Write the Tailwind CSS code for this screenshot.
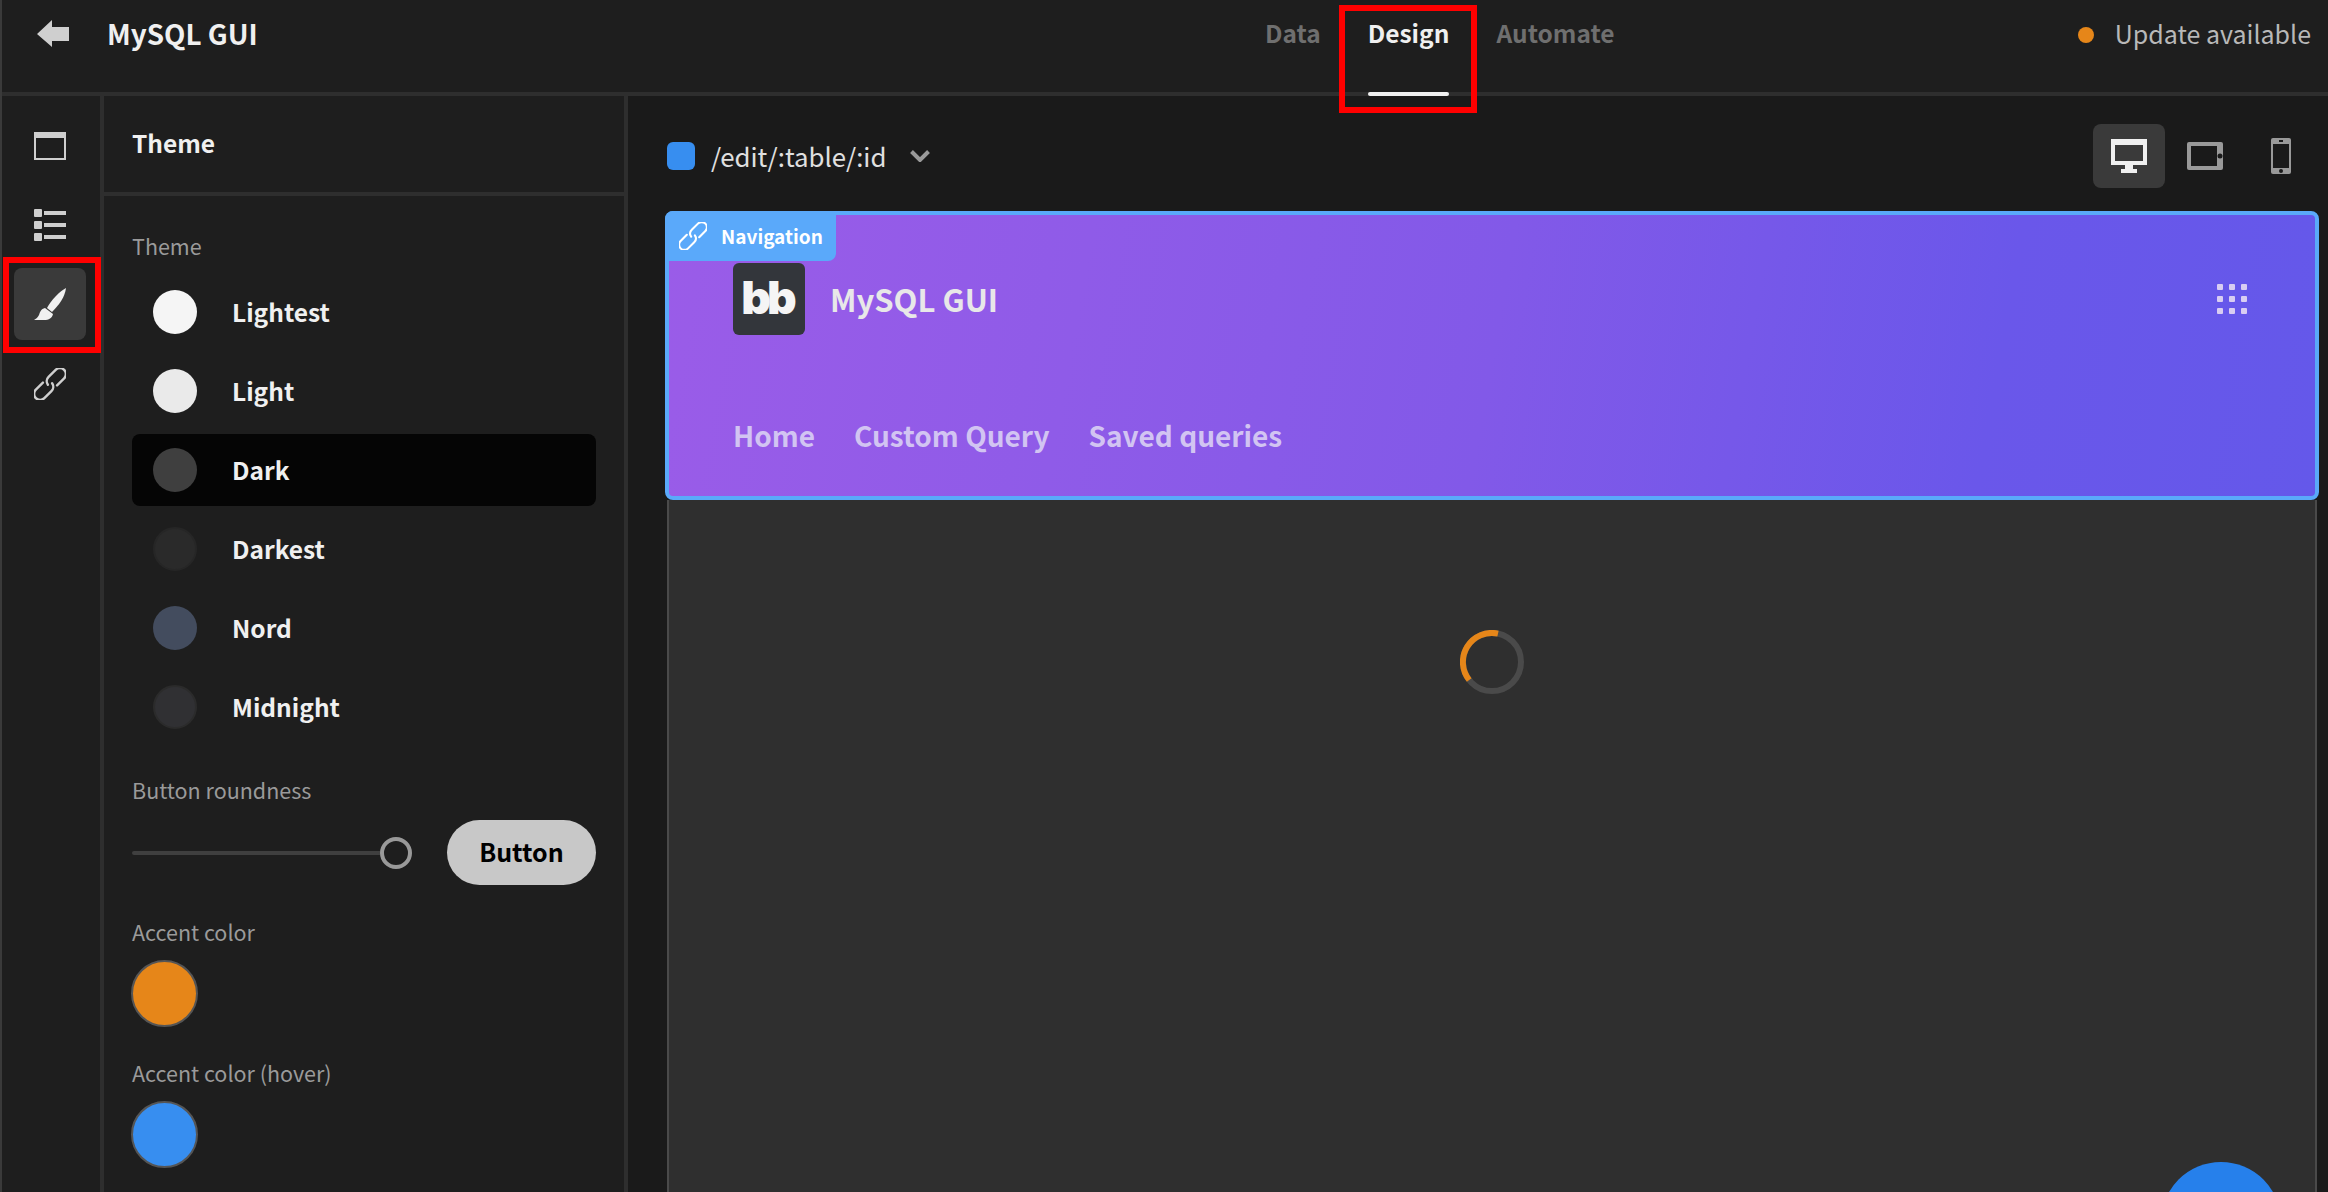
<!DOCTYPE html>
<html lang="en">
<head>
    <meta charset="UTF-8">
    <meta name="viewport" content="width=device-width, initial-scale=1.0">
    <title>MySQL GUI - Design</title>
    <script src="https://cdn.jsdelivr.net/npm/@tailwindcss/browser@4"></script>
</head>
<body class="bg-[#1a1a1a]">
<div class="relative w-[2328px] h-[1192px] overflow-hidden flex flex-col border-l-2 border-[#3a3a3a] font-['Noto_Sans_CJK_SC','Noto_Sans',sans-serif] text-[#f0f0f0]">

    <!-- top bar -->
    <header class="relative h-[96px] shrink-0 flex bg-[#1e1e1e] border-b-4 border-[#2e2e2e]">
        <svg class="absolute left-[35px] top-[20px] w-[32px] h-[27px]" viewBox="0 0 32 27" fill="#cfcfcf"><path d="M0 14 15 0v7h17v14H15v6z"/></svg>
        <div class="ml-[105px] mt-[12px] h-[42px] leading-[42px] text-[27.800px] font-semibold w-[1158px]">MySQL GUI</div>
        <nav class="flex gap-[47px] mt-[12px] h-[42px] leading-[42px] text-[24.500px] font-semibold text-[#6f6f6f]">
            <span>Data</span>
            <span class="relative text-[#f0f0f0]">Design
                <span class="absolute left-0 right-0 top-[80px] h-[4px] rounded-full bg-[#f0f0f0]"></span>
            </span>
            <span>Automate</span>
        </nav>
        <div class="absolute right-[17px] top-[12px] flex items-center gap-[21px] h-[42px] leading-[42px] text-[25px] text-[#b8b8b8]">
            <span class="w-[16px] h-[16px] mt-[4px] rounded-full bg-[#e68619]"></span>
            <span>Update available</span>
        </div>
    </header>

    <div class="flex flex-1 min-h-0">
        <!-- icon rail -->
        <aside class="w-[102px] shrink-0 flex flex-col items-center pr-[2px] pt-[36px] bg-[#1e1e1e] border-r-4 border-[#2e2e2e]">
            <svg class="w-[32px] h-[28px]" viewBox="0 0 32 28" fill="#cfcfcf"><path d="M0 0h32v28H0zM2 6v20h28V6z" fill-rule="evenodd"/></svg>
            <svg class="w-[32px] h-[32px] mt-[49px]" viewBox="0 0 32 32" fill="#cfcfcf"><rect width="8" height="8" rx="1"/><rect y="12" width="8" height="8" rx="1"/><rect y="24" width="8" height="8" rx="1"/><rect x="10" y="2" width="22" height="4"/><rect x="10" y="14" width="22" height="4"/><rect x="10" y="26" width="22" height="4"/></svg>
            <div class="w-[72px] h-[72px] mt-[27px] rounded-lg bg-[#3a3a3a] flex items-center justify-center">
                <svg class="w-[32px] h-[32px]" viewBox="0 0 32 32" fill="#f0f0f0"><path d="M32 0C26 3 17 12 13 20l5 4C25 17 31 9 32 0z"/><path d="M11 20c-4 1-5 4-6 7-1 2-3 4-5 5h10c5 0 8-2 9-6z"/></svg>
            </div>
            <svg class="w-[32px] h-[32px] mt-[28px]" viewBox="0 0 32 32" fill="none" stroke="#cfcfcf" stroke-width="2.400" stroke-linecap="round"><g transform="rotate(-45 16 16)"><path d="M12 10H2a6 6 0 0 0 0 12H12a6 6 0 0 0 6-5"/><path d="M20 22H30a6 6 0 0 0 0-12H20a6 6 0 0 0-6 5"/></g></svg>
        </aside>

        <!-- theme panel -->
        <section class="w-[524px] shrink-0 bg-[#1e1e1e] border-r-4 border-[#2e2e2e]">
            <div class="h-[100px] px-[28px] pb-[2px] flex items-center border-b-4 border-[#2e2e2e] text-[24.500px] font-semibold">Theme</div>
            <div class="px-[28px]">
                <div class="mt-[34px] h-[32px] leading-[32px] text-[21.500px] text-[#9a9a9a]">Theme</div>
                <ul class="mt-[14px] flex flex-col gap-[7px] text-[24.500px] font-semibold">
                    <li class="h-[72px] pl-[21px] flex items-center gap-[35px]"><span class="w-[44px] h-[44px] rounded-full bg-[#f5f5f5]"></span>Lightest</li>
                    <li class="h-[72px] pl-[21px] flex items-center gap-[35px]"><span class="w-[44px] h-[44px] rounded-full bg-[#eaeaea]"></span>Light</li>
                    <li class="h-[72px] pl-[21px] flex items-center gap-[35px] rounded-lg bg-[#050505]"><span class="w-[44px] h-[44px] rounded-full bg-[#3f3f3f]"></span>Dark</li>
                    <li class="h-[72px] pl-[21px] flex items-center gap-[35px]"><span class="w-[44px] h-[44px] rounded-full bg-[#2a2a2a] border-2 border-[#262626]"></span>Darkest</li>
                    <li class="h-[72px] pl-[21px] flex items-center gap-[35px]"><span class="w-[44px] h-[44px] rounded-full bg-[#434c5e]"></span>Nord</li>
                    <li class="h-[72px] pl-[21px] flex items-center gap-[35px]"><span class="w-[44px] h-[44px] rounded-full bg-[#303033] border-2 border-[#2b2b2b]"></span>Midnight</li>
                </ul>
                <div class="mt-[31px] h-[32px] leading-[32px] text-[21.500px] text-[#9a9a9a]">Button roundness</div>
                <div class="mt-[14px] h-[65px] flex items-center">
                    <div class="w-[248px] h-[4px] rounded-l-full bg-[#3f3f3f]"></div>
                    <div class="w-[32px] h-[32px] rounded-full border-4 border-[#999999]"></div>
                    <button class="ml-auto w-[149px] h-[65px] pb-[2px] rounded-full bg-[#c8c8c8] text-black text-[25px] font-semibold">Button</button>
                </div>
                <div class="mt-[31px] h-[32px] leading-[32px] text-[21.500px] text-[#9a9a9a]">Accent color</div>
                <div class="mt-[12px] -ml-px w-[67px] h-[67px] rounded-full bg-[#e68619] border-2 border-[#555555]"></div>
                <div class="mt-[30px] h-[32px] leading-[32px] text-[21.500px] text-[#9a9a9a]">Accent color (hover)</div>
                <div class="mt-[12px] -ml-px w-[67px] h-[67px] rounded-full bg-[#378ef0] border-2 border-[#555555]"></div>
            </div>
        </section>

        <!-- preview -->
        <main class="flex-1 min-w-0 flex flex-col pl-[37px] pr-[9px]">
            <div class="h-[115px] shrink-0 relative flex items-center pt-[5px]">
                <span class="w-[28px] h-[28px] ml-[2px] rounded-md bg-[#378ef0]"></span>
                <span class="ml-[16px] text-[25.800px] leading-[40px] text-[#e0e0e0]">/edit/:table/:id</span>
                <svg class="ml-[24px] w-[20px] h-[12px]" viewBox="0 0 20 12" fill="none" stroke="#9a9a9a" stroke-width="4"><path d="M1.500 1.500 10 10l8.500-8.500"/></svg>
                <div class="ml-auto mr-[28px] flex items-center">
                    <div class="w-[72px] h-[64px] rounded-lg bg-[#3a3a3a] flex items-center justify-center">
                        <svg class="w-[36px] h-[34px]" viewBox="0 0 36 34" fill="#f0f0f0"><path d="M0 0h36v26H0zM4 6v16h28V6z" fill-rule="evenodd"/><rect x="14" y="26" width="8" height="4"/><rect x="10" y="30" width="16" height="4"/></svg>
                    </div>
                    <svg class="ml-[22px] w-[36px] h-[28px]" viewBox="0 0 36 28"><rect width="36" height="28" rx="2" fill="#999999"/><rect x="4" y="4" width="26" height="20" fill="#1a1a1a"/><circle cx="33" cy="14" r="2.500" fill="#1a1a1a"/></svg>
                    <svg class="ml-[48px] w-[20px] h-[36px]" viewBox="0 0 20 36"><rect width="20" height="36" rx="2" fill="#999999"/><rect x="2" y="6" width="16" height="24" fill="#1a1a1a"/><rect x="8" y="2" width="4" height="2" fill="#1a1a1a"/><circle cx="10" cy="33" r="2" fill="#1a1a1a"/></svg>
                </div>
            </div>

            <!-- navigation component -->
            <div class="relative h-[289px] shrink-0 rounded-lg border-4 border-[#5aa9fa] bg-[linear-gradient(100deg,#9a5ce8_0%,#8f5be8_25%,#8259e8_50%,#6a57ea_80%,#6458ea_100%)]">
                <div class="absolute -left-[4px] -top-[4px] w-[171px] h-[50px] rounded-tl-lg rounded-br-lg bg-[#5aa9fa] flex items-center pl-[14px] gap-[14px]">
                    <svg class="w-[28px] h-[28px]" viewBox="0 0 32 32" fill="none" stroke="#ffffff" stroke-width="2.400" stroke-linecap="round"><g transform="rotate(-45 16 16)"><path d="M12 10H2a6 6 0 0 0 0 12H12a6 6 0 0 0 6-5"/><path d="M20 22H30a6 6 0 0 0 0-12H20a6 6 0 0 0-6 5"/></g></svg>
                    <span class="text-[19px] leading-[30px] font-semibold text-white">Navigation</span>
                </div>
                <div class="pl-[64px] pr-[68px] pt-[48px] flex items-center">
                    <div class="w-[72px] h-[72px] rounded-md bg-[#33363b] flex items-center justify-center font-['Inter',sans-serif] font-black text-[#f5f5f5] text-[46px] leading-none tracking-[-4px] pr-[4px] pb-[4px]">bb</div>
                    <div class="ml-[25px] text-[31px] leading-[48px] font-semibold text-[#e8e8e8]">MySQL GUI</div>
                    <div class="ml-auto grid grid-cols-3 gap-[6px]">
                        <span class="w-[6px] h-[6px] rounded-[1px] bg-[#d8cdf2]"></span><span class="w-[6px] h-[6px] rounded-[1px] bg-[#d8cdf2]"></span><span class="w-[6px] h-[6px] rounded-[1px] bg-[#d8cdf2]"></span>
                        <span class="w-[6px] h-[6px] rounded-[1px] bg-[#d8cdf2]"></span><span class="w-[6px] h-[6px] rounded-[1px] bg-[#d8cdf2]"></span><span class="w-[6px] h-[6px] rounded-[1px] bg-[#d8cdf2]"></span>
                        <span class="w-[6px] h-[6px] rounded-[1px] bg-[#d8cdf2]"></span><span class="w-[6px] h-[6px] rounded-[1px] bg-[#d8cdf2]"></span><span class="w-[6px] h-[6px] rounded-[1px] bg-[#d8cdf2]"></span>
                    </div>
                </div>
                <div class="pl-[64px] mt-[78px] flex gap-[39px] text-[28px] leading-[44px] font-semibold text-[#d2c4f2]">
                    <span>Home</span>
                    <span>Custom Query</span>
                    <span>Saved queries</span>
                </div>
            </div>

            <!-- page body -->
            <div class="flex-1 mx-[2px] bg-[#2f2f2f] border-x-2 border-[#4a4a4a] pt-[130px]">
                <svg class="block mx-auto w-[64px] h-[64px]" viewBox="0 0 64 64" fill="none" stroke-width="6"><circle cx="32" cy="32" r="29" stroke="#4a4a4a"/><path d="M9.200 50A29 29 0 0 1 38 3.600" stroke="#e68619"/></svg>
            </div>
        </main>
    </div>

    <!-- floating button, cut off by the window -->
    <div class="absolute left-[2159px] top-[1162px] w-[120px] h-[120px] rounded-full bg-[#2680eb]"></div>

    <!-- red annotation boxes -->
    <div class="absolute left-[1337px] top-[5px] w-[138px] h-[108px] border-[6px] border-[#ff0000]"></div>
    <div class="absolute left-[1px] top-[257px] w-[98px] h-[96px] border-[6px] border-[#ff0000]"></div>
</div>
</body>
</html>
